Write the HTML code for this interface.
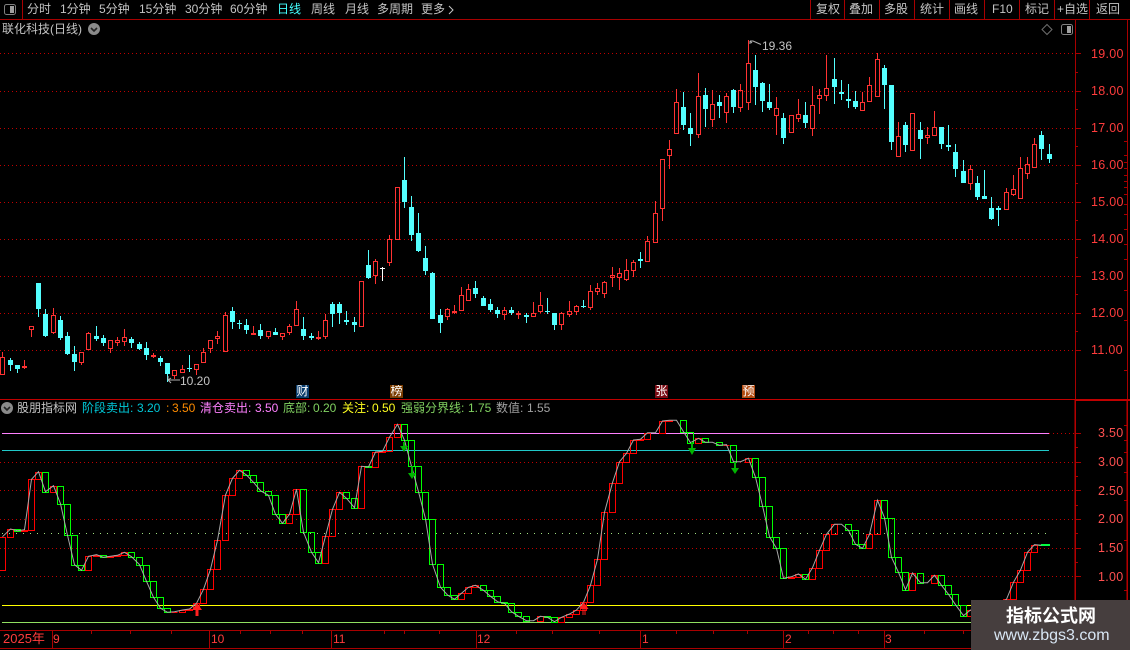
<!DOCTYPE html>
<html lang="zh">
<head>
<meta charset="utf-8">
<title>联化科技</title>
<style>
html,body{margin:0;padding:0;background:#000;}
body{position:relative;width:1130px;height:650px;overflow:hidden;font-family:"Liberation Sans","WenQuanYi Zen Hei","Noto Sans CJK SC",sans-serif;}
svg{position:absolute;left:0;top:0;}
.t{position:absolute;white-space:nowrap;font-size:12px;line-height:14px;color:#c4c4c4;}
.p{color:#ff3c3c;letter-spacing:.3px;font-size:12.5px;}
.b{position:absolute;width:13px;height:13px;top:385px;color:#fff;font-size:12px;line-height:13px;text-align:center;overflow:hidden;}
#wm{position:absolute;left:971px;top:600px;width:159px;height:50px;background:#463e3e;}
#wm div{position:absolute;white-space:nowrap;}
</style>
</head>
<body>
<svg id="c" width="1130" height="650" viewBox="0 0 1130 650" shape-rendering="crispEdges"></svg>

<svg width="1130" height="650" viewBox="0 0 1130 650" style="pointer-events:none">
  <rect x="4.5" y="4.5" width="11" height="10" rx="2" fill="none" stroke="#808080"/>
  <rect x="10" y="6" width="4" height="7" fill="#a0a0a0"/>
  <circle cx="94" cy="29" r="6" fill="#8a8a8a"/>
  <path d="M91 28l3 3 3-3" fill="none" stroke="#222" stroke-width="1.6"/>
  <path d="M1047 24.500l5 5-5 5-5-5z" fill="none" stroke="#6e6e6e"/>
  <rect x="1061.500" y="24.500" width="11" height="10" rx="2" fill="none" stroke="#808080"/>
  <rect x="1067" y="26" width="4" height="7" fill="#a0a0a0"/>
  <circle cx="7" cy="408" r="6" fill="#8a8a8a"/>
  <path d="M4 407l3 3 3-3" fill="none" stroke="#222" stroke-width="1.6"/>
  <path d="M449 6l4 4-4 4" fill="none" stroke="#c4c4c4"/>
  <path d="M750 41h3l8 3.500M750 41v3M750 41l2 2" fill="none" stroke="#b0b0b0"/>
  <path d="M180 380h-12M168 380l3-2M168 380l3 3M168 380v-4" fill="none" stroke="#b0b0b0"/>
  <path d="M197 603l5 7h-3.500v6h-3v-6h-3.500z" fill="#ff2020"/>
  <path d="M583.500 602l5 7h-3v6h-1v-6h-1v6h-1v-6h-3z" fill="#ff2020"/>
  <path d="M404 452l-4-6h3v-4h2v4h3z" fill="#00b400"/>
  <path d="M412 479l-4-6h3v-7h2v7h3z" fill="#00b400"/>
  <path d="M692 455l-4-7h3v-6h2v6h3z" fill="#00b400"/>
  <path d="M735 474l-4-6h3v-6h2v6h3z" fill="#00b400"/>
</svg>

<div class="t" style="left:27px;top:2px">分时</div>
<div class="t" style="left:60px;top:2px">1分钟</div>
<div class="t" style="left:99px;top:2px">5分钟</div>
<div class="t" style="left:139px;top:2px">15分钟</div>
<div class="t" style="left:185px;top:2px">30分钟</div>
<div class="t" style="left:230px;top:2px">60分钟</div>
<div class="t" style="left:277px;top:2px;color:#4ff">日线</div>
<div class="t" style="left:311px;top:2px">周线</div>
<div class="t" style="left:345px;top:2px">月线</div>
<div class="t" style="left:377px;top:2px">多周期</div>
<div class="t" style="left:421px;top:2px">更多</div>

<div class="t" style="left:816px;top:2px">复权</div>
<div class="t" style="left:849px;top:2px">叠加</div>
<div class="t" style="left:884px;top:2px">多股</div>
<div class="t" style="left:920px;top:2px">统计</div>
<div class="t" style="left:954px;top:2px">画线</div>
<div class="t" style="left:992px;top:2px">F10</div>
<div class="t" style="left:1025px;top:2px">标记</div>
<div class="t" style="left:1057px;top:2px">+自选</div>
<div class="t" style="left:1096px;top:2px">返回</div>

<div class="t" style="left:2px;top:22px">联化科技(日线)</div>
<div class="t" style="left:762px;top:39px">19.36</div>
<div class="t" style="left:180px;top:374px">10.20</div>

<div class="t p" style="left:1091px;top:47px">19.00</div>
<div class="t p" style="left:1091px;top:84px">18.00</div>
<div class="t p" style="left:1091px;top:121px">17.00</div>
<div class="t p" style="left:1091px;top:158px">16.00</div>
<div class="t p" style="left:1091px;top:195px">15.00</div>
<div class="t p" style="left:1091px;top:232px">14.00</div>
<div class="t p" style="left:1091px;top:269px">13.00</div>
<div class="t p" style="left:1091px;top:306px">12.00</div>
<div class="t p" style="left:1091px;top:343px">11.00</div>

<div class="b" style="left:296px;background:#0a3d6d">财</div>
<div class="b" style="left:390px;background:#7a3c00">榜</div>
<div class="b" style="left:655px;background:#7a0c14">张</div>
<div class="b" style="left:742px;background:#b34a10">预</div>

<div class="t" style="left:17px;top:401px">股朋指标网</div>
<div class="t" style="left:82px;top:401px;color:#00c8d8">阶段卖出:</div>
<div class="t" style="left:137px;top:401px;color:#00c8d8">3.20</div>
<div class="t" style="left:166px;top:401px;color:#ff8c00">:</div>
<div class="t" style="left:172px;top:401px;color:#ff8c00">3.50</div>
<div class="t" style="left:200px;top:401px;color:#ff80ff">清仓卖出:</div>
<div class="t" style="left:255px;top:401px;color:#ff80ff">3.50</div>
<div class="t" style="left:283px;top:401px;color:#80d060">底部:</div>
<div class="t" style="left:313px;top:401px;color:#80d060">0.20</div>
<div class="t" style="left:342px;top:401px;color:#ffff20">关注:</div>
<div class="t" style="left:372px;top:401px;color:#ffff20">0.50</div>
<div class="t" style="left:401px;top:401px;color:#80d060">强弱分界线:</div>
<div class="t" style="left:468px;top:401px;color:#80d060">1.75</div>
<div class="t" style="left:496px;top:401px;color:#a0a0a0">数值:</div>
<div class="t" style="left:527px;top:401px;color:#a0a0a0">1.55</div>

<div class="t p" style="left:1098px;top:426px;color:#ff5050">3.50</div>
<div class="t p" style="left:1098px;top:455px;color:#ff5050">3.00</div>
<div class="t p" style="left:1098px;top:484px;color:#ff5050">2.50</div>
<div class="t p" style="left:1098px;top:512px;color:#ff5050">2.00</div>
<div class="t p" style="left:1098px;top:541px;color:#ff5050">1.50</div>
<div class="t p" style="left:1098px;top:570px;color:#ff5050">1.00</div>

<div class="t" style="left:3px;top:632px;color:#ff3c3c;font-size:13px">2025年</div>
<div class="t" style="left:53px;top:632px;color:#ff3c3c">9</div>
<div class="t" style="left:211px;top:632px;color:#ff3c3c">10</div>
<div class="t" style="left:333px;top:632px;color:#ff3c3c">11</div>
<div class="t" style="left:477px;top:632px;color:#ff3c3c">12</div>
<div class="t" style="left:642px;top:632px;color:#ff3c3c">1</div>
<div class="t" style="left:785px;top:632px;color:#ff3c3c">2</div>
<div class="t" style="left:885px;top:632px;color:#ff3c3c">3</div>

<div id="wm">
  <div style="left:35px;top:5px;font-size:18px;line-height:22px;font-weight:bold;color:#fff">指标公式网</div>
  <div style="left:23px;top:27px;font-size:16px;line-height:18px;color:#d8e6f4">www.zbgs3.com</div>
</div>

<script>
var R='#a80000',B='#c80000',s='';
function L(d,c,x){s+='<path d="'+d+'" fill="none" stroke="'+c+'" '+(x||'')+'/>';}
var grid='';
[53,91,128,165,202,239,276,313,350,462,490,519,548,576].forEach(function(y){grid+='M0 '+(y+.5)+'H1075';});
L(grid,'#c00000','stroke-dasharray="1 3"');
L('M1049 433.500H1075','#c00000','stroke-dasharray="1 3"');
var ax='M0 19.500H1130M22.500 0V19M810.500 0V19M844.500 0V19M879.500 0V19M914.500 0V19M949.500 0V19M984.500 0V19M1019.500 0V19M1054.500 0V19M1089.500 0V19';
ax+='M0 630.500H1130M0 648.500H1130M1075.500 19V648M1127.500 19V630';
[52,209,331,476,640,783,884].forEach(function(x){ax+='M'+(x+.5)+' 630V648';});
[91,130,171,240,270,302,384,404,439,516,552,599,676,713,747,808,833,858,924,963].forEach(function(x){ax+='M'+(x+.5)+' 630V634';});
[53,91,128,165,202,239,276,313,350,433,462,490,519,548,576].forEach(function(y){ax+='M1075 '+(y+.5)+'H1081';});
[72,109,146,183,220,257,294,331,447,476,505,533,562].forEach(function(y){ax+='M1075 '+(y+.5)+'H1078';});
[141,155,162,168,175,181,187,194,204,214,229,244,259,290,320,370,425,440,452,472,500,540,590].forEach(function(y){ax+='M1124 '+(y+.5)+'H1127';});
L(ax,R);
L('M0 399.500H1130M1075 400.500H1130','#c00000');
L('M1075 400V630M1127 400V630','#c00000');

var ca='r357,375,352,375;c360,365,358,371;c365,369,365,373;r366,368,360,369;r326,330,326,337;c283,309,283,317;c314,336,309,337;r315,333,308,334;c320,338,316,340;c336,354,332,355;c354,362,346,371;r352,363,352,365;r333,350,332,350;c336,339,326,341;c338,343,335,346;r340,349,340,353;r340,343,337,346;r337,342,329,346;c339,343,337,348;c344,349,342,350;c348,355,342,360;r355,357,353,358;c358,362,356,366;c363,374,363,382;r370,376,370,379;r369,373,365,373;c368,369,355,372;r364,370,364,375;r352,363,348,363;r340,349,340,353;r336,339,331,344;r315,352,312,352;c311,322,307,329;c323,324,320,329;'
+'c325,330,319,334;r333,335,326,335;c330,336,324,339;r331,337,331,339;c332,335,328,335;r333,337,333,340;r326,333,324,335;r309,326,301,326;c329,336,317,340;c336,338,333,340;r337,339,331,340;r320,337,314,339;c304,314,302,327;c304,313,302,324;c320,322,311,325;c322,325,317,332;r281,327,281,327;c265,278,250,279;r261,276,259,284;w268,269,267,281;r239,263,235,266;r187,240,187,240;c180,202,157,208;c207,235,196,241;c233,251,213,252;c258,271,246,275;c273,319,272,319;c315,323,309,333;r309,317,308,320;r311,313,305,314;r295,311,287,311;r289,301,284,301;c288,294,281,298;'
+'c298,306,296,306;c304,310,299,312;c310,314,307,318;r310,315,307,320;c310,313,307,315;r313,315,311,319;c315,317,313,323;r313,317,302,317;r305,312,292,313;c311,312,298,314;c313,325,313,330;r313,325,312,330;r311,315,301,317;r306,312,305,315;c306,307,300,308;r291,308,285,310;r288,292,283,295;r282,294,281,298;r275,278,267,287;r273,278,268,290;r270,280,259,281;r262,271,260,277;c259,261,252,268;r241,262,236,262;r213,243,201,243;r159,209,159,221;r149,156,140,169;'
+'r102,134,89,134;c107,125,92,130;c128,134,113,146;r96,135,73,138;c95,109,88,127;r104,120,90,127;c102,106,95,118;r96,113,93,123;c90,107,89,113;r90,108,84,112;r63,103,40,110;c70,87,55,105;c83,101,82,112;c102,108,84,110;r108,116,97,135;c118,138,113,144;r115,133,115,133;r114,119,99,122;c115,123,102,128;r105,129,86,136;r95,99,89,114;r88,96,55,101;c79,87,58,104;c92,94,80,100;c99,101,84,108;c101,107,91,109;r102,111,92,111;r85,102,77,102;r59,97,53,97;c68,85,65,109;c85,142,85,150;'
+'r136,157,122,157;c125,145,122,152;r113,151,113,151;c130,139,122,159;r135,138,127,144;r127,136,111,136;c127,144,127,149;c145,147,125,151;c152,169,144,177;c171,183,160,183;r169,184,165,190;c183,197,176,200;c196,199,170,199;c208,219,197,220;c208,210,206,226;r192,210,188,210;r189,195,175,196;r168,199,157,199;r164,174,157,179;r144,168,138,168;c135,149,131,160;c154,159,144,163';
var rb='',rw='',cb='',cw='',wb='';
ca.split(';').forEach(function(e,i){
  var t=e[0],a=e.slice(1).split(',').map(Number),x=i?Math.floor(3+7.165*i):2;
  var w='M'+(x+.5)+' '+a[2]+'V'+a[3];
  if(t=='r'){
    rb+='M'+(x-2+.5)+' '+(a[0]+.5)+'H'+(x+2.5)+'V'+(a[1]-.5)+'H'+(x-1.5)+'Z';
    rw+='M'+(x+.5)+' '+a[2]+'V'+a[0]+'M'+(x+.5)+' '+a[1]+'V'+a[3];
  }else if(t=='c'){
    cw+=w;
    s+='<rect x="'+(x-2)+'" y="'+a[0]+'" width="5" height="'+(a[1]-a[0])+'" fill="#54ffff"/>';
  }else{
    wb+=w+'M'+(x-2)+' '+(a[0]+.5)+'H'+(x+3);
  }
});
L(rb+rw,'#ff3232');L(cw,'#54ffff');L(wb,'#ffffff');

L('M2 433.500H1049','#ff80ff');
L('M2 450.500H1049','#20c8c8');
L('M2 605.500H1049','#ffff00');
L('M2 622.500H1049','#90e060');
L('M2 533.500H1049','#a0e080','stroke-dasharray="1 6"');

var V=[525,425,402,407,404,253,230,290,272,326,421,509,526,484,479,487,484,481,472,485,509,559,607,640,652,650,645,642,625,583,523,436,300,250,226,240,262,287,301,358,385,358,283,412,472,503,424,343,292,310,338,214,216,171,169,127,88,136,214,290,371,508,577,600,613,595,577,571,586,604,620,625,650,664,677,677,664,667,680,667,657,645,622,571,493,352,263,200,175,135,133,113,113,78,76,76,110,143,130,142,142,151,149,200,200,190,247,332,425,460,550,545,537,553,518,466,418,388,388,406,448,460,418,316,368,487,532,584,534,563,563,541,571,598,629,662,645,650,650,640,625,613,562,525,472,449,451];
var rd='',gr='',pts='';
for(var i=0;i<147;i++){
  var a=V[i],b=V[i+1],x=i?Math.floor(3+7.165*i):2,y1=Math.round(395+Math.min(a,b)/3)+.5,y2=Math.round(395+Math.max(a,b)/3)+.5;
  var d='M'+(x-2.5)+' '+y1+'H'+(x+3.5)+'V'+y2+'H'+(x-2.5)+'Z';
  if(b<a)rd+=d;else if(b>a)gr+=d;
  pts+=(i?'L':'M')+(x+.5)+' '+(395+b/3).toFixed(1);
}
L(gr,'#00ff00');L(rd,'#ff0000');
s+='<rect x="1041" y="544" width="9" height="2" fill="#00ff40"/>';
s+='<path d="'+pts+'" fill="none" stroke="#a8a8a8" stroke-width="1" shape-rendering="auto"/>';
document.getElementById('c').innerHTML=s;
</script>
</body>
</html>
